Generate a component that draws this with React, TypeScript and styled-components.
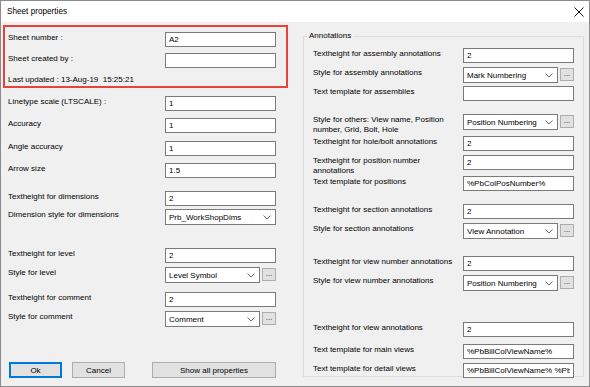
import React from "react";
import styled, { createGlobalStyle } from "styled-components";

const GlobalStyle = createGlobalStyle`
  html, body {
    margin: 0;
    padding: 0;
    background: #ffffff;
  }
  body {
    font-family: "Liberation Sans", Arial, sans-serif;
    font-size: 8px;
    color: #000;
  }
`;

const Window = styled.div`
  width: 590px;
  height: 387px;
  box-sizing: border-box;
  border: 1px solid #8c8c8c;
  display: flex;
  flex-direction: column;
  background: #f0f0f0;
`;

const TitleBar = styled.div`
  height: 21px;
  flex: none;
  background: #ffffff;
  display: flex;
  align-items: center;
  justify-content: space-between;
  padding: 0 5px 0 6px;
  font-size: 8.2px;
`;

const Body = styled.div`
  flex: 1;
  display: flex;
`;

const LeftCol = styled.div`
  width: 289px;
  flex: none;
  padding-left: 2px;
  box-sizing: border-box;
  display: flex;
  flex-direction: column;
`;

const RedBox = styled.div`
  margin-top: 3px;
  width: 285px;
  height: 63px;
  box-sizing: border-box;
  border: 2px solid #e8423d;
  padding-left: 3px;
`;

const LeftList = styled.div`
  padding-left: 5px;
`;

const Row = styled.div<{ $mt: number; $labelWidth: number }>`
  display: grid;
  grid-template-columns: ${(p) => p.$labelWidth}px 111px;
  align-items: start;
  margin-top: ${(p) => p.$mt}px;
`;

const Label = styled.div`
  line-height: 10px;
  white-space: nowrap;
  padding-top: 1px;
`;

const InfoLine = styled.div<{ $mt: number }>`
  margin-top: ${(p) => p.$mt}px;
  line-height: 10px;
  white-space: nowrap;
`;

const TextBox = styled.input`
  width: 111px;
  height: 15px;
  box-sizing: border-box;
  margin: 0;
  border: 1px solid #7a7a7a;
  background: #ffffff;
  padding: 0 3px;
  font-family: inherit;
  font-size: 8px;
  color: #000;
  outline: none;
`;

const ComboRow = styled.div`
  display: flex;
  gap: 2px;
  align-items: flex-start;
`;

const Combo = styled.div<{ $width: number }>`
  width: ${(p) => p.$width}px;
  height: 16px;
  box-sizing: border-box;
  border: 1px solid #7a7a7a;
  background: #ffffff;
  display: flex;
  align-items: center;
  justify-content: space-between;
  padding: 0 4px 0 3px;
  white-space: nowrap;
`;

const Ellipsis = styled.div`
  width: 14px;
  height: 13px;
  margin-top: 1px;
  box-sizing: border-box;
  border: 1px solid #adadad;
  background: #e1e1e1;
  display: flex;
  align-items: center;
  justify-content: center;
  line-height: 8px;
  padding-bottom: 2px;
  color: #222;
`;

const ButtonRow = styled.div`
  display: flex;
  margin-top: 35px;
  padding-left: 1px;
`;

const DialogButton = styled.div<{ $width: number; $gap: number; $default?: boolean }>`
  width: ${(p) => p.$width}px;
  height: 16px;
  margin-left: ${(p) => p.$gap}px;
  box-sizing: border-box;
  background: #e1e1e1;
  border: 1px solid ${(p) => (p.$default ? "#0078d7" : "#adadad")};
  box-shadow: ${(p) => (p.$default ? "inset 0 0 0 1px #0078d7" : "none")};
  display: flex;
  align-items: center;
  justify-content: center;
`;

const RightCol = styled.div`
  flex: 1;
  padding: 14px 0 0 13px;
`;

const Group = styled.div`
  width: 281px;
  height: 341px;
  box-sizing: border-box;
  border: 1px solid #dcdcdc;
  padding-left: 9px;
`;

const Legend = styled.div`
  width: fit-content;
  margin: -6px 0 0 -6px;
  padding: 0 2px;
  height: 10px;
  line-height: 10px;
  background: #f0f0f0;
`;

const Chevron = () => (
  <svg width="8" height="5" viewBox="0 0 8 5">
    <polyline points="0.5,0.5 4,4 7.5,0.5" fill="none" stroke="#666" strokeWidth="1" />
  </svg>
);

const CloseIcon = () => (
  <svg width="10" height="10" viewBox="0 0 10 10">
    <path d="M0.5 0.5 L9.5 9.5 M9.5 0.5 L0.5 9.5" stroke="#111" strokeWidth="1" />
  </svg>
);

type Field = {
  label: React.ReactNode;
  kind: "text" | "combo" | "comboBtn";
  value: string;
  mt: number;
};

const leftFields: Field[] = [
  { label: "Linetype scale (LTSCALE) :", kind: "text", value: "1", mt: 8 },
  { label: "Accuracy", kind: "text", value: "1", mt: 7 },
  { label: "Angle accuracy", kind: "text", value: "1", mt: 8 },
  { label: "Arrow size", kind: "text", value: "1.5", mt: 7 },
  { label: "Textheight for dimensions", kind: "text", value: "2", mt: 13 },
  { label: "Dimension style for dimensions", kind: "combo", value: "Prb_WorkShopDims", mt: 3 },
  { label: "Textheight for level", kind: "text", value: "2", mt: 23 },
  { label: "Style for level", kind: "comboBtn", value: "Level Symbol", mt: 4 },
  { label: "Textheight for comment", kind: "text", value: "2", mt: 9 },
  { label: "Style for comment", kind: "comboBtn", value: "Comment", mt: 4 },
];

const rightFields: Field[] = [
  { label: "Textheight for assembly annotations", kind: "text", value: "2", mt: 7 },
  { label: "Style for assembly annotations", kind: "comboBtn", value: "Mark Numbering", mt: 4 },
  { label: "Text template for assemblies", kind: "text", value: "", mt: 3 },
  {
    label: (
      <>
        Style for others: View name, Position
        <br />
        number, Grid, Bolt, Hole
      </>
    ),
    kind: "comboBtn",
    value: "Position Numbering",
    mt: 13,
  },
  { label: "Textheight for hole/bolt annotations", kind: "text", value: "2", mt: 1 },
  {
    label: (
      <>
        Textheight for position number
        <br />
        annotations
      </>
    ),
    kind: "text",
    value: "2",
    mt: 4,
  },
  { label: "Text template for positions", kind: "text", value: "%PbColPosNumber%", mt: 0 },
  { label: "Textheight for section annotations", kind: "text", value: "2", mt: 13 },
  { label: "Style for section annotations", kind: "comboBtn", value: "View Annotation", mt: 4 },
  { label: "Textheight for view number annotations", kind: "text", value: "2", mt: 17 },
  { label: "Style for view number annotations", kind: "comboBtn", value: "Position Numbering", mt: 4 },
  { label: "Textheight for view annotations", kind: "text", value: "2", mt: 31 },
  { label: "Text template for main views", kind: "text", value: "%PbBillColViewName%", mt: 7 },
  { label: "Text template for detail views", kind: "text", value: "%PbBillColViewName% %PbBillColViewName%", mt: 4 },
];

const Control = ({ field }: { field: Field }) => {
  if (field.kind === "text") {
    return <TextBox readOnly value={field.value} />;
  }
  const withButton = field.kind === "comboBtn";
  return (
    <ComboRow>
      <Combo $width={withButton ? 95 : 111}>
        <span>{field.value}</span>
        <Chevron />
      </Combo>
      {withButton && <Ellipsis>...</Ellipsis>}
    </ComboRow>
  );
};

const FieldRow = ({ field, labelWidth }: { field: Field; labelWidth: number }) => (
  <Row $mt={field.mt} $labelWidth={labelWidth}>
    <Label>{field.label}</Label>
    <Control field={field} />
  </Row>
);

export default function App() {
  return (
    <>
      <GlobalStyle />
      <Window>
        <TitleBar>
          <span>Sheet properties</span>
          <CloseIcon />
        </TitleBar>
        <Body>
          <LeftCol>
            <RedBox>
              <FieldRow field={{ label: "Sheet number :", kind: "text", value: "A2", mt: 5 }} labelWidth={157} />
              <FieldRow field={{ label: "Sheet created by :", kind: "text", value: "", mt: 6 }} labelWidth={157} />
              <InfoLine $mt={7}>Last updated : 13-Aug-19&nbsp;&nbsp;15:25:21</InfoLine>
            </RedBox>
            <LeftList>
              {leftFields.map((f, i) => (
                <FieldRow key={i} field={f} labelWidth={157} />
              ))}
              <ButtonRow>
                <DialogButton $width={53} $gap={0} $default>
                  Ok
                </DialogButton>
                <DialogButton $width={53} $gap={10}>
                  Cancel
                </DialogButton>
                <DialogButton $width={124} $gap={27}>
                  Show all properties
                </DialogButton>
              </ButtonRow>
            </LeftList>
          </LeftCol>
          <RightCol>
            <Group>
              <Legend>Annotations</Legend>
              {rightFields.map((f, i) => (
                <FieldRow key={i} field={f} labelWidth={150} />
              ))}
            </Group>
          </RightCol>
        </Body>
      </Window>
    </>
  );
}
